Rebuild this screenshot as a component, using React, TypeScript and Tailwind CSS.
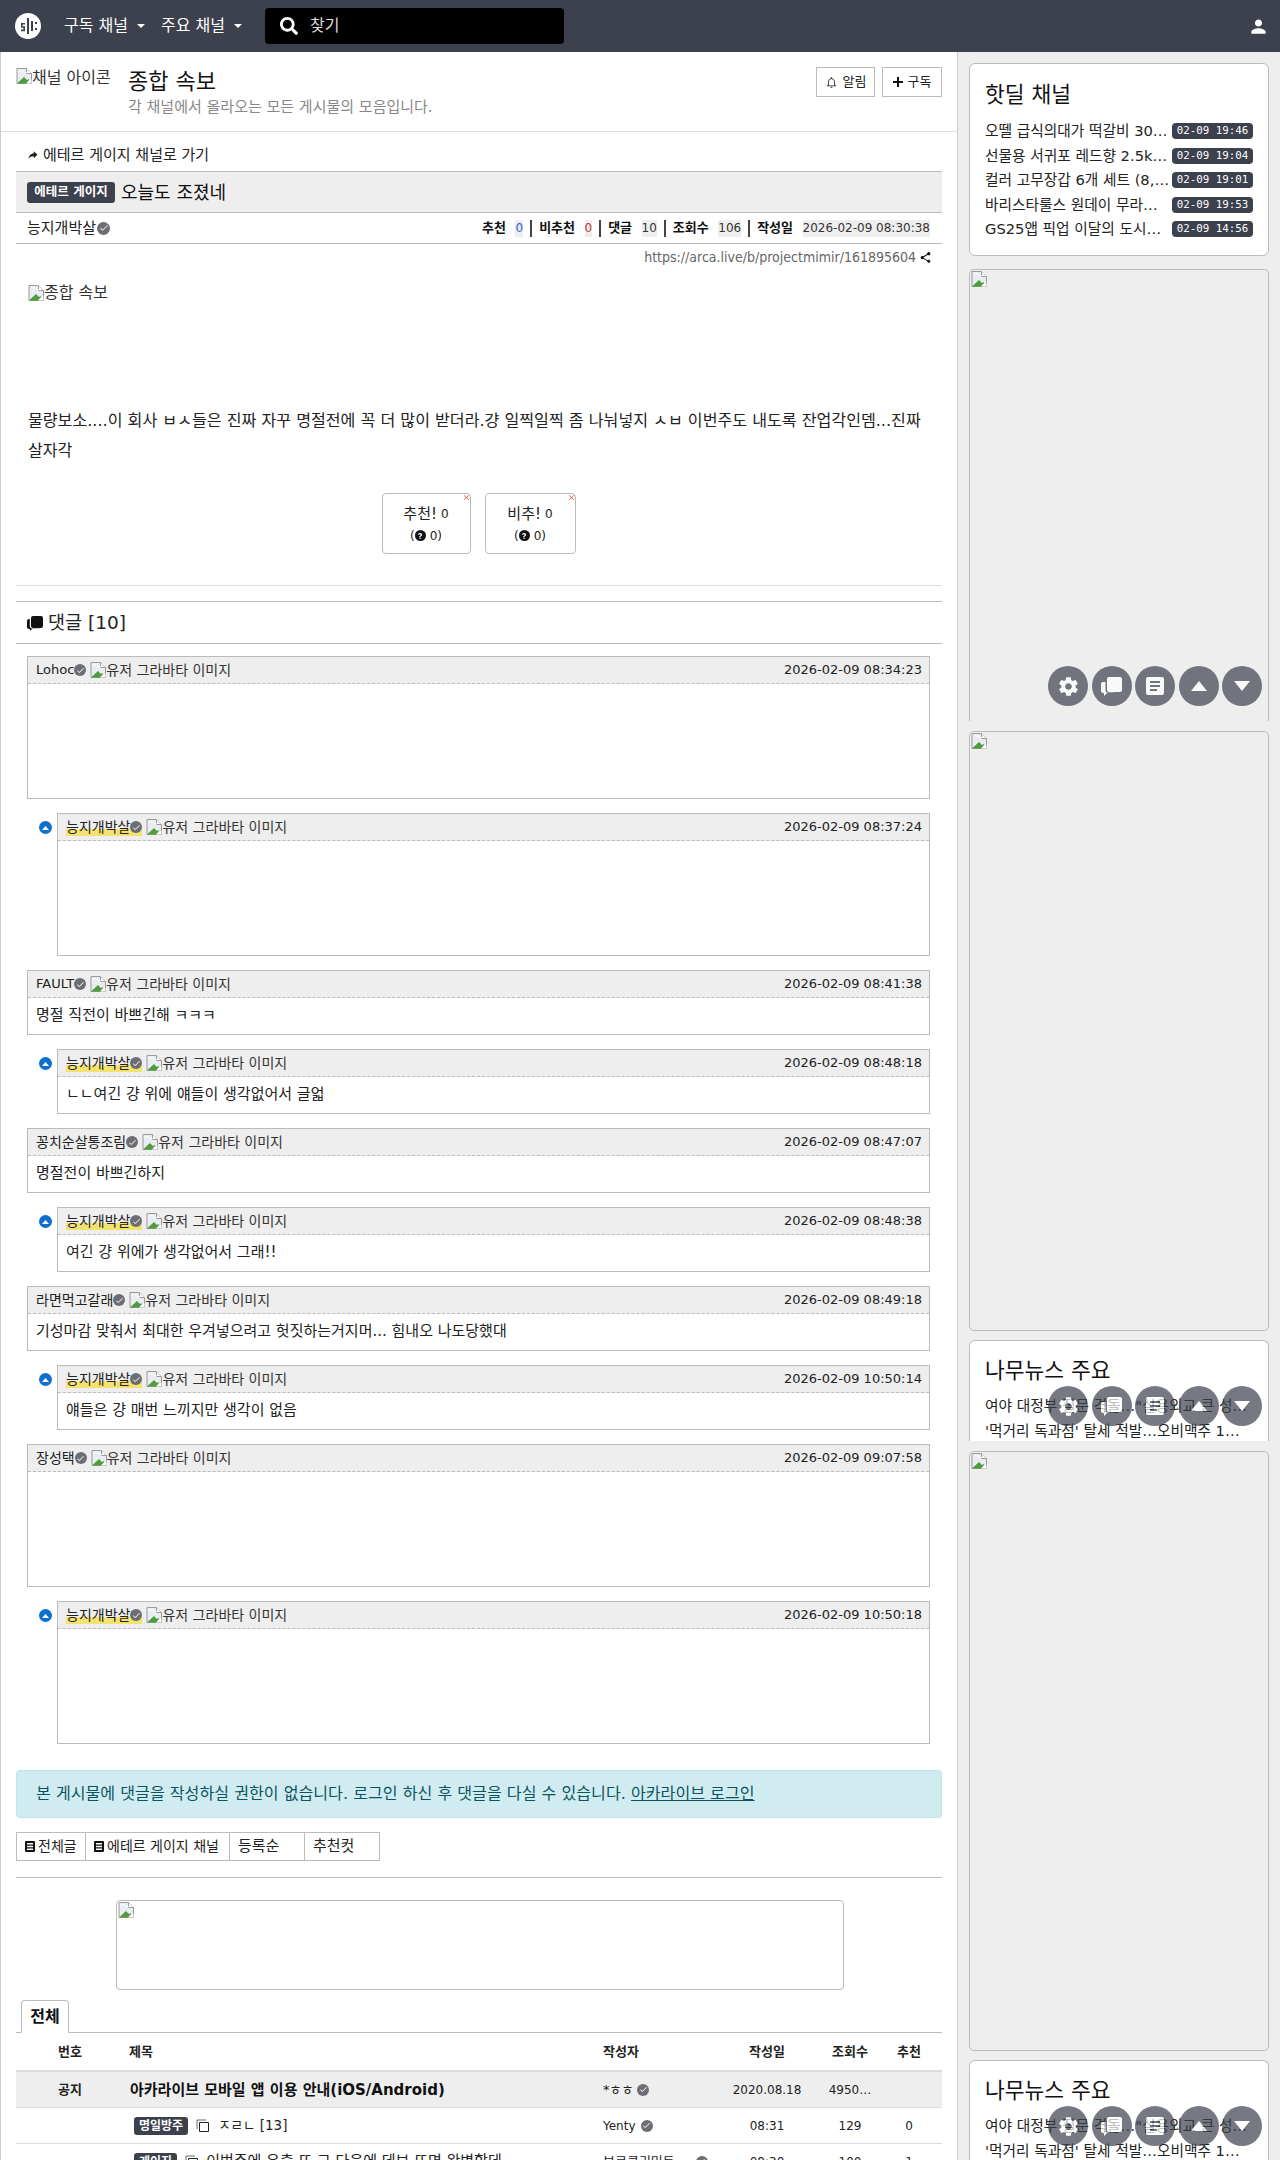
import React from "react";
import { IoMdSettings, IoMdPerson, IoMdNotificationsOutline, IoMdShare, IoMdCheckmark, IoMdClose, IoMdShareAlt } from "react-icons/io";
import { FaSearch, FaQuestion } from "react-icons/fa";

function Broken() {
  return (
    <svg width="16" height="16" viewBox="0 0 16 16" className="inline-block shrink-0 align-top">
      <path d="M1 0.5H10.5L15.5 5.5V15.5H1Z" fill="#e8ecf3" stroke="#9a9a9a" />
      <path d="M10.5 0.5V5.5H15.5" fill="#fff" stroke="#9a9a9a" />
      <path d="M2 4c2-2 4-1.5 5-0.5 1 1 3 1 4 1.5" fill="none" stroke="#fff" />
      <path d="M1 15.5L8 9l3 3 2-1v1l-3 3.5z" fill="#4f9d3a" />
      <path d="M10 15.5l5.5-4v4z" fill="#fff" />
    </svg>
  );
}

function Check({ size = 12 }: { size?: number }) {
  return (
    <span className="inline-flex shrink-0 items-center justify-center rounded-full bg-[#6d6e73] text-white" style={{ width: size, height: size }}>
      <IoMdCheckmark size={size - 3} />
    </span>
  );
}

function Bar() {
  const cls = "flex h-10 w-10 shrink-0 items-center justify-center rounded-full bg-[#3d414d] text-white";
  return (
    <div className="absolute bottom-[15px] right-[6px] flex gap-[3.5px] opacity-70">
      <div className={cls}><IoMdSettings size={23} /></div>
      <div className={cls}>
        <svg width="21" height="21" viewBox="0 0 21 21">
          <path d="M8 1h11a2 2 0 0 1 2 2v11a2 2 0 0 1-2 2H8a2 2 0 0 1-2-2V3a2 2 0 0 1 2-2z" fill="#fff" />
          <path d="M4.5 6H2a2 2 0 0 0-2 2v7a2 2 0 0 0 2 2h1v3l3-3h7v-.2H7a2.5 2.5 0 0 1-2.5-2.5z" fill="#fff" />
        </svg>
      </div>
      <div className={cls}>
        <svg width="20" height="20" viewBox="0 0 20 20"><path d="M3 1h14a2 2 0 0 1 2 2v14a2 2 0 0 1-2 2H3a2 2 0 0 1-2-2V3a2 2 0 0 1 2-2zM5 5v2h10V5zM5 9v2h10V9zM5 13v2h7v-2z" fill="#fff" fillRule="evenodd" /></svg>
      </div>
      <div className={cls}><svg width="16" height="10" viewBox="0 0 16 10"><path d="M8 0l8 10H0z" fill="#fff" /></svg></div>
      <div className={cls}><svg width="16" height="10" viewBox="0 0 16 10"><path d="M0 0h16L8 10z" fill="#fff" /></svg></div>
    </div>
  );
}

function CopyIcon() {
  return (
    <svg width="13" height="13" viewBox="0 0 13 13" className="shrink-0">
      <path d="M3.5 3.5h9v9h-9z" fill="none" stroke="#222" />
      <path d="M1 10V1h9" fill="none" stroke="#666" />
    </svg>
  );
}

function Clipped({ className, children }: { className: string; children?: React.ReactNode }) {
  return <div className={"relative shrink-0 overflow-hidden " + className}>{children}</div>;
}

function AdBox({ h, mt, bar }: { h: string; mt: string; bar?: boolean }) {
  return (
    <div className={"relative shrink-0 rounded-t-[5px] border border-[#bbb] bg-[#eee] " + h + " " + mt + (bar ? " border-b-0" : " rounded-b-[5px]")}>
      <div className="pl-[1px] pt-[1px]"><Broken /></div>
      {bar && <Bar />}
    </div>
  );
}

function Deal({ t, d }: { t: string; d: string }) {
  return (
    <div className="flex h-[24.5px] items-center justify-between">
      <span className="whitespace-nowrap text-[14.7px] text-[#222]">{t}</span>
      <span className="flex h-[16px] w-[81px] shrink-0 items-center justify-center rounded-[4px] bg-[#3d414d] font-['DejaVu_Sans_Mono',monospace] text-[10.8px] text-white">{d}</span>
    </div>
  );
}

function NewsCard({ mt }: { mt: string }) {
  return (
    <Clipped className={"h-[101px] rounded-t-[6px] border border-b-0 border-[#bbb] bg-white " + mt}>
      <div className="pl-[15px] pr-[15px] pt-[13px]">
        <div className="h-[33px] text-[21.5px] leading-[33px] text-[#111]">나무뉴스 주요</div>
        <div className="mt-[6px] whitespace-nowrap text-[14.7px] leading-[25px] text-[#222]">여야 대정부 질문 격돌…"실용외교 큰 성…</div>
        <div className="whitespace-nowrap text-[14.7px] leading-[25px] text-[#222]">'먹거리 독과점' 탈세 적발…오비맥주 1…</div>
      </div>
      <Bar />
    </Clipped>
  );
}

function Name({ n, hl, latin }: { n: string; hl?: boolean; latin?: boolean }) {
  return (
    <span className="flex items-center">
      <span className={"flex items-center leading-[18px] text-[#222] " + (latin ? "text-[13px] " : "text-[14px] ") + (hl ? "bg-[linear-gradient(transparent_60%,#f3e270_60%)]" : "")}>
        {n}
        <Check size={12} />
      </span>
      <span className="ml-[4px] flex items-center text-[14px] text-[#333]">
        <Broken />
        유저 그라바타 이미지
      </span>
    </span>
  );
}

function Comment({ n, hl, date, text, reply, tall, latin }: { n: string; hl?: boolean; date: string; text?: string; reply?: boolean; tall?: boolean; latin?: boolean }) {
  return (
    <div className={"relative " + (reply ? "pl-[30px]" : "")}>
      {reply && (
        <span className="absolute left-[12px] top-[8px] flex h-[13px] w-[13px] items-center justify-center rounded-full bg-[#0d6fce]">
          <svg width="7" height="4" viewBox="0 0 7 4"><path d="M3.5 0L7 4H0z" fill="#fff" /></svg>
        </span>
      )}
      <div className={"border border-[#bbb] " + (tall ? "h-[143px]" : "h-[65px]")}>
        <div className="flex h-[27px] items-center justify-between border-b border-dashed border-[#bbb] bg-[#eee] pl-[8px] pr-[7px]">
          <Name n={n} hl={hl} latin={latin} />
          <span className="text-[13px] text-[#222]">{date}</span>
        </div>
        {text && <div className="pl-[8px] pt-[7px] text-[15px] leading-[20px] text-[#222]">{text}</div>}
      </div>
    </div>
  );
}

function Stat({ l, v, c, sep = true }: { l: string; v: string; c?: string; sep?: boolean }) {
  return (
    <span className="flex items-center">
      <span className="text-[13px] font-bold text-[#111]">{l}</span>
      <span className={"ml-[9.5px] bg-[#eee] text-[12px] leading-[17px] " + (c ?? "text-[#333]")}>{v}</span>
      {sep && <span className="mx-[7px] h-[17px] w-[2px] bg-[#444]" />}
    </span>
  );
}

function Row({ cells, bg }: { cells: [string, React.ReactNode, React.ReactNode, string, string, string]; bg?: string }) {
  return (
    <div className={"grid h-[36px] grid-cols-[108px_479px_117px_94px_72px_46px] items-center border-b border-[#ddd] " + (bg ?? "")}>
      <span className="text-center text-[13px] font-bold text-[#222]">{cells[0]}</span>
      <span>{cells[1]}</span>
      <span className="flex items-center text-[12px] text-[#222]">{cells[2]}</span>
      <span className="text-center text-[12px] text-[#222]">{cells[3]}</span>
      <span className="text-center text-[12px] text-[#222]">{cells[4]}</span>
      <span className="text-center text-[12px] text-[#222]">{cells[5]}</span>
    </div>
  );
}

function Tag({ t }: { t: string }) {
  return <span className="inline-flex h-[18px] items-center rounded-[3px] bg-[#3d414d] px-[5px] text-[12px] font-bold text-white">{t}</span>;
}

function ListIcon() {
  return (
    <svg width="10" height="11" viewBox="0 0 10 11" className="shrink-0"><path d="M1 0h8a1 1 0 0 1 1 1v9a1 1 0 0 1-1 1H1a1 1 0 0 1-1-1V1a1 1 0 0 1 1-1zM2 2v1.5h6V2zM2 4.75v1.5h6v-1.5zM2 7.5V9h6V7.5z" fill="#111" fillRule="evenodd" /></svg>
  );
}

const CBtn = "flex h-[29px] items-center whitespace-nowrap border border-[#bbb] pl-[8px] text-[#222]";

export default function App() {
  return (
    <div className="flex h-[2160px] flex-col overflow-hidden bg-[#eee] font-['DejaVu_Sans','Noto_Sans_CJK_KR',sans-serif]">
      <header className="flex h-[52px] shrink-0 items-center bg-[#3d414d] text-white">
        <svg width="26" height="26" viewBox="0 0 26 26" className="ml-[15px]">
          <circle cx="13" cy="13" r="13" fill="#fff" />
          <path d="M12 5v16h2V5z" fill="#3d414d" />
          <path d="M6 10h4v1.6H7.6v1.6H10v5H6v-1.6h2.4v-1.8H6zM16 8h2v10h-2zM20 9h2v2h-2zM20 15h2v2h-2z" fill="#3d414d" />
        </svg>
        <span className="ml-[23px] text-[16px]">구독 채널</span>
        <span className="ml-[9px] h-0 w-0 border-x-[4px] border-t-[4px] border-x-transparent border-t-white" />
        <span className="ml-[16px] text-[16px]">주요 채널</span>
        <span className="ml-[9px] h-0 w-0 border-x-[4px] border-t-[4px] border-x-transparent border-t-white" />
        <div className="ml-[23px] flex h-[36px] w-[299px] items-center rounded-[4px] bg-black pl-[15px] text-[16px]">
          <FaSearch size={18} />
          <span className="ml-[12px] text-[#ddd]">찾기</span>
        </div>
        <IoMdPerson size={19} className="ml-auto mr-[12px]" />
      </header>

      <div className="flex min-h-0 flex-1">
        <main className="w-[958px] shrink-0 overflow-hidden border-x border-[#ccc] bg-white">
          <section className="relative flex h-[80px] border-b border-[#ddd]">
            <div className="ml-[15px] mt-[16px] flex h-[22px] w-[95px] overflow-hidden whitespace-nowrap text-[16px] leading-[20px] text-[#333]">
              <Broken />채널 아이콘
            </div>
            <div className="ml-[17px] mt-[16px]">
              <div className="text-[22px] leading-[28px] text-[#111]">종합 속보</div>
              <div className="mt-[1px] text-[15px] leading-[20px] text-[#888]">각 채널에서 올라오는 모든 게시물의 모음입니다.</div>
            </div>
            <div className="absolute right-[15px] top-[15px] flex gap-[7px]">
              <span className="flex h-[30px] w-[59px] items-center justify-center gap-[5px] border border-[#bbb] text-[13px] text-[#222]"><IoMdNotificationsOutline size={13} />알림</span>
              <span className="flex h-[30px] w-[60px] items-center justify-center gap-[5px] border border-[#bbb] text-[13px] text-[#222]">
                <svg width="10" height="10" viewBox="0 0 10 10"><path d="M4 0h2v4h4v2H6v4H4V6H0V4h4z" fill="#111" /></svg>구독
              </span>
            </div>
          </section>

          <div className="pl-[15px] pr-[15px]">
            <div className="flex h-[39px] items-center pl-[11px] pt-[7px] text-[15px] text-[#222]">
              <IoMdShareAlt size={12} className="mr-[4px]" />에테르 게이지 채널로 가기
            </div>
            <div className="flex h-[42px] items-center border-y border-[#bbb] bg-[#eee] pl-[11px]">
              <span className="flex h-[21px] w-[88px] items-center justify-center whitespace-nowrap rounded-[3px] bg-[#3d414d] text-[12.5px] font-bold text-white">에테르 게이지</span>
              <span className="ml-[6px] text-[18px] text-[#111]">오늘도 조졌네</span>
            </div>
            <div className="flex h-[31px] items-center justify-between border-b border-[#bbb] pl-[11px] pr-[12px]">
              <span className="flex items-center gap-[1px] text-[15px] text-[#222]">능지개박살<Check size={13} /></span>
              <span className="flex items-center">
                <Stat l="추천" v="0" c="text-[#2a63d4]" />
                <Stat l="비추천" v="0" c="text-[#c0392b]" />
                <Stat l="댓글" v="10" />
                <Stat l="조회수" v="106" />
                <Stat l="작성일" v="2026-02-09 08:30:38" sep={false} />
              </span>
            </div>
            <div className="flex h-[26px] items-center justify-end gap-[3px] pr-[10px] text-[14px] font-stretch-condensed text-[#666]">
              https://arca.live/b/projectmimir/161895604
              <IoMdShare size={13} className="text-[#111]" />
            </div>

            <div className="ml-[12px] mt-[13px] flex h-[20px] items-center text-[16px] text-[#333]"><Broken />종합 속보</div>
            <p className="mx-[12px] mt-[103px] text-[16.1px] leading-[30px] text-[#222]">물량보소....이 회사 ㅂㅅ들은 진짜 자꾸 명절전에 꼭 더 많이 받더라.걍 일찍일찍 좀 나눠넣지 ㅅㅂ 이번주도 내도록 잔업각인뎀...진짜 살자각</p>

            <div className="mt-[27px] flex justify-center gap-[14px] pr-[1px]">
              {["추천!", "비추!"].map((t, i) => (
                <div key={t} className={"relative flex h-[61px] flex-col items-center justify-center rounded-[4px] border border-[#bbb] text-[#222] " + (i === 0 ? "w-[89px]" : "w-[91px]")}>
                  <IoMdClose size={9} className="absolute right-[-1px] top-[-1px] text-[#e06060]" />
                  <div className="flex items-center gap-[4px] text-[15px] leading-[24px]">{t}<span className="text-[12px]">0</span></div>
                  <div className="flex items-center whitespace-pre text-[12px] leading-[20px]">(<span className="mr-[4px] flex h-[11px] w-[11px] items-center justify-center rounded-full bg-[#111] text-white"><FaQuestion size={6} /></span>0)</div>
                </div>
              ))}
            </div>

            <div className="mt-[31px] border-t border-[#ddd]" />
            <div className="mt-[15px] flex h-[43px] items-center border-y border-[#bbb] pl-[11px] text-[18.5px] text-[#222]">
              <svg width="16" height="16" viewBox="0 0 16 16" className="mr-[5px]">
                <path d="M6 1h8a2 2 0 0 1 2 2v8a2 2 0 0 1-2 2H6a2 2 0 0 1-2-2V3a2 2 0 0 1 2-2z" fill="#111" />
                <path d="M2.8 4H2a2 2 0 0 0-2 2v6a2 2 0 0 0 2 2h1v2l2-2h7v-.2H6A3.2 3.2 0 0 1 2.8 10.6z" fill="#111" />
              </svg>
              댓글 [10]
            </div>

            <div className="ml-[11px] mr-[12px] mt-[12px] flex flex-col gap-[14px]">
              <Comment n="Lohoc" latin date="2026-02-09 08:34:23" tall />
              <Comment n="능지개박살" hl date="2026-02-09 08:37:24" reply tall />
              <Comment n="FAULT" latin date="2026-02-09 08:41:38" text="명절 직전이 바쁘긴해 ㅋㅋㅋ" />
              <Comment n="능지개박살" hl date="2026-02-09 08:48:18" text="ㄴㄴ여긴 걍 위에 얘들이 생각없어서 글얿" reply />
              <Comment n="꽁치순살통조림" date="2026-02-09 08:47:07" text="명절전이 바쁘긴하지" />
              <Comment n="능지개박살" hl date="2026-02-09 08:48:38" text="여긴 걍 위에가 생각없어서 그래!!" reply />
              <Comment n="라면먹고갈래" date="2026-02-09 08:49:18" text="기성마감 맞춰서 최대한 우겨넣으려고 헛짓하는거지머... 힘내오 나도당했대" />
              <Comment n="능지개박살" hl date="2026-02-09 10:50:14" text="얘들은 걍 매번 느끼지만 생각이 없음" reply />
              <Comment n="장성택" date="2026-02-09 09:07:58" tall />
              <Comment n="능지개박살" hl date="2026-02-09 10:50:18" reply tall />
            </div>

            <div className="mt-[26px] flex h-[48px] items-center rounded-[4px] border border-[#bee5eb] bg-[#d1ecf1] pl-[19px] text-[16.1px] text-[#0c5460]">
              <span>본 게시물에 댓글을 작성하실 권한이 없습니다. 로그인 하신 후 댓글을 다실 수 있습니다. <span className="underline">아카라이브 로그인</span></span>
            </div>

            <div className="mt-[14px] flex">
              <span className={CBtn + " w-[70px] gap-[3px] text-[14px]"}><ListIcon />전체글</span>
              <span className={CBtn + " w-[144px] gap-[3px] border-l-0 text-[14px]"}><ListIcon />에테르 게이지 채널</span>
              <span className={CBtn + " w-[75px] border-l-0 text-[15px]"}>등록순</span>
              <span className={CBtn + " w-[75px] border-l-0 text-[15px]"}>추천컷</span>
            </div>

            <div className="mt-[16px] border-t border-[#bbb]" />
            <div className="ml-[100px] mt-[22px] h-[90px] w-[728px] rounded-[4px] border border-[#bbb] pl-[1px] pt-[1px]"><Broken /></div>

            <div className="mt-[10px] flex h-[33px] border-b border-[#bbb] pl-[5px]">
              <span className="flex h-[33px] w-[48px] items-center justify-center rounded-t-[4px] border border-b-white border-[#bbb] bg-white text-[16px] font-bold text-[#111]">전체</span>
            </div>
            <div className="grid h-[37px] grid-cols-[108px_479px_117px_94px_72px_46px] items-center text-[13px] font-bold text-[#222]">
              <span className="text-center">번호</span>
              <span className="pl-[5px]">제목</span>
              <span>작성자</span>
              <span className="text-center">작성일</span>
              <span className="text-center">조회수</span>
              <span className="text-center">추천</span>
            </div>
            <div className="border-t-[2px] border-[#ddd]" />
            <Row bg="bg-[#eee]" cells={["공지", <span className="pl-[6px] text-[15px] font-bold text-[#111]">아카라이브 모바일 앱 이용 안내(iOS/Android)</span>, <><span className="text-[13px]">*ㅎㅎ</span><span className="ml-[4px] flex"><Check size={12} /></span></>, "2020.08.18", "4950…", ""]} />
            <Row cells={["", <span className="flex items-center pl-[10px] text-[13.5px] text-[#222]"><Tag t="명일방주" /><span className="ml-[8px] mr-[9px] flex"><CopyIcon /></span>ㅈㄹㄴ [13]</span>, <>Yenty<span className="ml-[5px] flex"><Check size={12} /></span></>, "08:31", "129", "0"]} />
            <Row cells={["", <span className="flex items-center pl-[10px] text-[15px] text-[#222]"><Tag t="게이지" /><span className="ml-[8px] mr-[8px] flex"><CopyIcon /></span>이번주에 유출 또 그 다음에 데브 또면 완벽할데</span>, <><span className="text-[13px]">브로콜리민트</span><span className="ml-[21px] flex"><Check size={12} /></span></>, "08:30", "100", "1"]} />
          </div>
        </main>

        <aside className="flex min-w-0 flex-1 flex-col pl-[11px] pr-[11px] pt-[11px]">
          <div className="h-[193px] shrink-0 rounded-[6px] border border-[#bbb] bg-white pl-[15px] pr-[15px] pt-[14px]">
            <div className="h-[33px] text-[21.5px] leading-[33px] text-[#111]">핫딜 채널</div>
            <div className="mt-[8px]">
              <Deal t="오뗄 급식의대가 떡갈비 30…" d="02-09 19:46" />
              <Deal t="선물용 서귀포 레드향 2.5k…" d="02-09 19:04" />
              <Deal t="컬러 고무장갑 6개 세트 (8,…" d="02-09 19:01" />
              <Deal t="바리스타룰스 원데이 무라…" d="02-09 19:53" />
              <Deal t="GS25앱 픽업 이달의 도시…" d="02-09 14:56" />
            </div>
          </div>
          <Clipped className="mt-[13px] h-[452px]"><AdBox h="h-[452px]" mt="" bar /></Clipped>
          <AdBox h="h-[600px]" mt="mt-[10px]" />
          <NewsCard mt="mt-[9px]" />
          <AdBox h="h-[600px]" mt="mt-[10px]" />
          <NewsCard mt="mt-[9px]" />
        </aside>
      </div>
    </div>
  );
}
